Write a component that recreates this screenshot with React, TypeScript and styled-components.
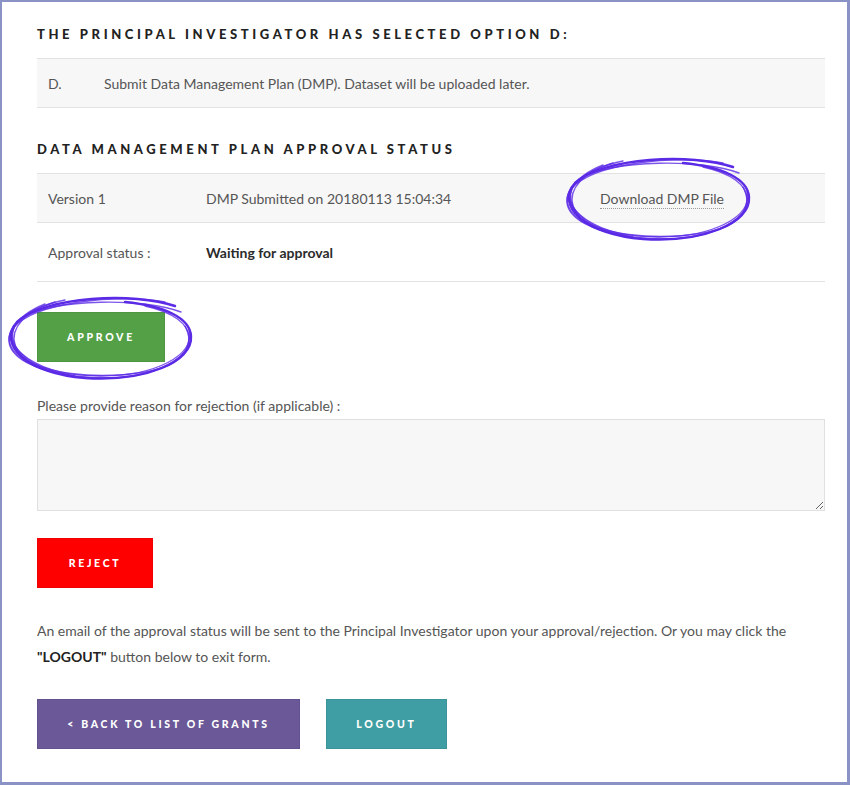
import React from "react";
import styled, { createGlobalStyle } from "styled-components";

const Global = createGlobalStyle`
  html, body { margin: 0; padding: 0; background: #ffffff; }
  body { font-family: Lato, "Noto Sans", sans-serif; }
  * { box-sizing: border-box; }
`;

const Frame = styled.div`
  position: relative;
  width: 850px;
  height: 785px;
  border-style: solid;
  border-color: #8a92c6;
  border-width: 2px 3px 3px 2px;
  padding: 0 22px 0 35px;
  overflow: hidden;
  color: #555555;
  font-size: 14px;
`;

const SectionTitle = styled.h3<{ $top: number }>`
  margin: ${(p) => p.$top}px 0 0 0;
  font-family: Lato, "Open Sans", sans-serif;
  font-weight: 900;
  font-size: 13px;
  line-height: 16px;
  letter-spacing: 3.6px;
  color: #222222;
  text-transform: uppercase;
`;

const Table = styled.div<{ $top: number }>`
  margin-top: ${(p) => p.$top}px;
  border-top: 1px solid #e2e2e2;
`;

const Row = styled.div<{ $shaded?: boolean; $height: number; $cols: string }>`
  display: grid;
  grid-template-columns: ${(p) => p.$cols};
  align-items: center;
  height: ${(p) => p.$height}px;
  padding-left: 11px;
  background: ${(p) => (p.$shaded ? "#f7f7f7" : "#ffffff")};
  border-bottom: 1px solid #e2e2e2;
`;

const Cell = styled.span<{ $bold?: boolean }>`
  font-weight: ${(p) => (p.$bold ? 700 : 400)};
  color: ${(p) => (p.$bold ? "#2b2b2b" : "#555555")};
  white-space: nowrap;
`;

const FileLink = styled.a`
  color: #555555;
  text-decoration: none;
  border-bottom: 1px dotted #9a9a9a;
  padding-bottom: 1px;
`;

const Button = styled.button<{ $bg: string; $width: number; $top: number }>`
  display: block;
  margin-top: ${(p) => p.$top}px;
  width: ${(p) => p.$width}px;
  height: 50px;
  border: 1px solid rgba(0, 0, 0, 0.06);
  background: ${(p) => p.$bg};
  color: #ffffff;
  font-family: Lato, "Open Sans", sans-serif;
  font-weight: 900;
  font-size: 10.5px;
  letter-spacing: 2.7px;
  text-transform: uppercase;
  padding: 0;
  cursor: pointer;
`;

const ButtonRow = styled.div`
  display: flex;
  gap: 26px;
`;

const Label = styled.label`
  display: block;
  margin-top: 34px;
  line-height: 20px;
  color: #555555;
`;

const Reason = styled.textarea`
  display: block;
  margin-top: 3px;
  width: 100%;
  height: 92px;
  background: #f7f7f7;
  border: 1px solid #e0e0e0;
  border-radius: 0;
  resize: vertical;
  font-family: Lato, sans-serif;
`;

const Note = styled.p`
  margin: 30px 0 0 0;
  line-height: 26px;
  color: #555555;
  strong { color: #222222; font-weight: 700; }
`;

const Scribble = styled.svg<{ $left: number; $top: number }>`
  position: absolute;
  left: ${(p) => p.$left}px;
  top: ${(p) => p.$top}px;
  pointer-events: none;
  overflow: visible;
`;

function Circle({ left, top }: { left: number; top: number }) {
  const strokes = [
    "M 170 10 C 130 -4 40 0 12 26 C -8 48 22 78 80 82 C 140 86 188 66 186 40 C 185 22 160 10 120 6",
    "M 176 16 C 140 2 52 2 16 22 C -4 40 10 70 70 80 C 130 88 184 70 184 42 C 184 28 168 16 140 10",
    "M 160 6 C 110 -2 30 6 8 32 C -2 50 30 80 95 80 C 150 80 190 60 184 34",
    "M 40 8 C 10 20 -2 40 14 58 C 34 78 90 84 140 76 C 175 70 192 52 180 30",
    "M 60 4 C 20 12 2 32 4 46 C 6 62 30 74 60 78",
    "M 50 6 C 14 18 -4 36 8 54 C 18 68 40 76 70 80",
    "M 30 14 C 8 28 2 44 18 62",
  ];
  return (
    <Scribble $left={left} $top={top} width={190} height={86} viewBox="0 0 190 86">
      {strokes.map((d, i) => (
        <path
          key={i}
          d={d}
          fill="none"
          stroke="#5b2be6"
          strokeWidth={i === 0 ? 2.4 : 1.4}
          strokeOpacity={i === 0 ? 1 : 0.8}
          strokeLinecap="round"
        />
      ))}
    </Scribble>
  );
}

export default function App() {
  return (
    <>
      <Global />
      <Frame>
        <SectionTitle $top={24}>The Principal Investigator has selected Option D:</SectionTitle>
        <Table $top={16}>
          <Row $shaded $height={49} $cols="56px 1fr">
            <Cell>D.</Cell>
            <Cell>Submit Data Management Plan (DMP). Dataset will be uploaded later.</Cell>
          </Row>
        </Table>

        <SectionTitle $top={33}>Data Management Plan Approval Status</SectionTitle>
        <Table $top={16}>
          <Row $shaded $height={49} $cols="158px 394px 1fr">
            <Cell>Version 1</Cell>
            <Cell>DMP Submitted on 20180113 15:04:34</Cell>
            <Cell>
              <FileLink href="#">Download DMP File</FileLink>
            </Cell>
          </Row>
          <Row $height={59} $cols="158px 1fr">
            <Cell>Approval status :</Cell>
            <Cell $bold>Waiting for approval</Cell>
          </Row>
        </Table>

        <Button $bg="#53a046" $width={128} $top={30}>Approve</Button>

        <Label htmlFor="reason">Please provide reason for rejection (if applicable) :</Label>
        <Reason id="reason" />

        <Button $bg="#ff0000" $width={116} $top={27}>Reject</Button>

        <Note>
          An email of the approval status will be sent to the Principal Investigator upon your approval/rejection. Or you may
          click the <strong>"LOGOUT"</strong> button below to exit form.
        </Note>

        <ButtonRow>
          <Button $bg="#6a5898" $width={263} $top={29}>&lt; Back to list of grants</Button>
          <Button $bg="#3f9ea3" $width={121} $top={29}>Logout</Button>
        </ButtonRow>

        <Circle left={561} top={155} />
        <Circle left={3} top={294} />
      </Frame>
    </>
  );
}
